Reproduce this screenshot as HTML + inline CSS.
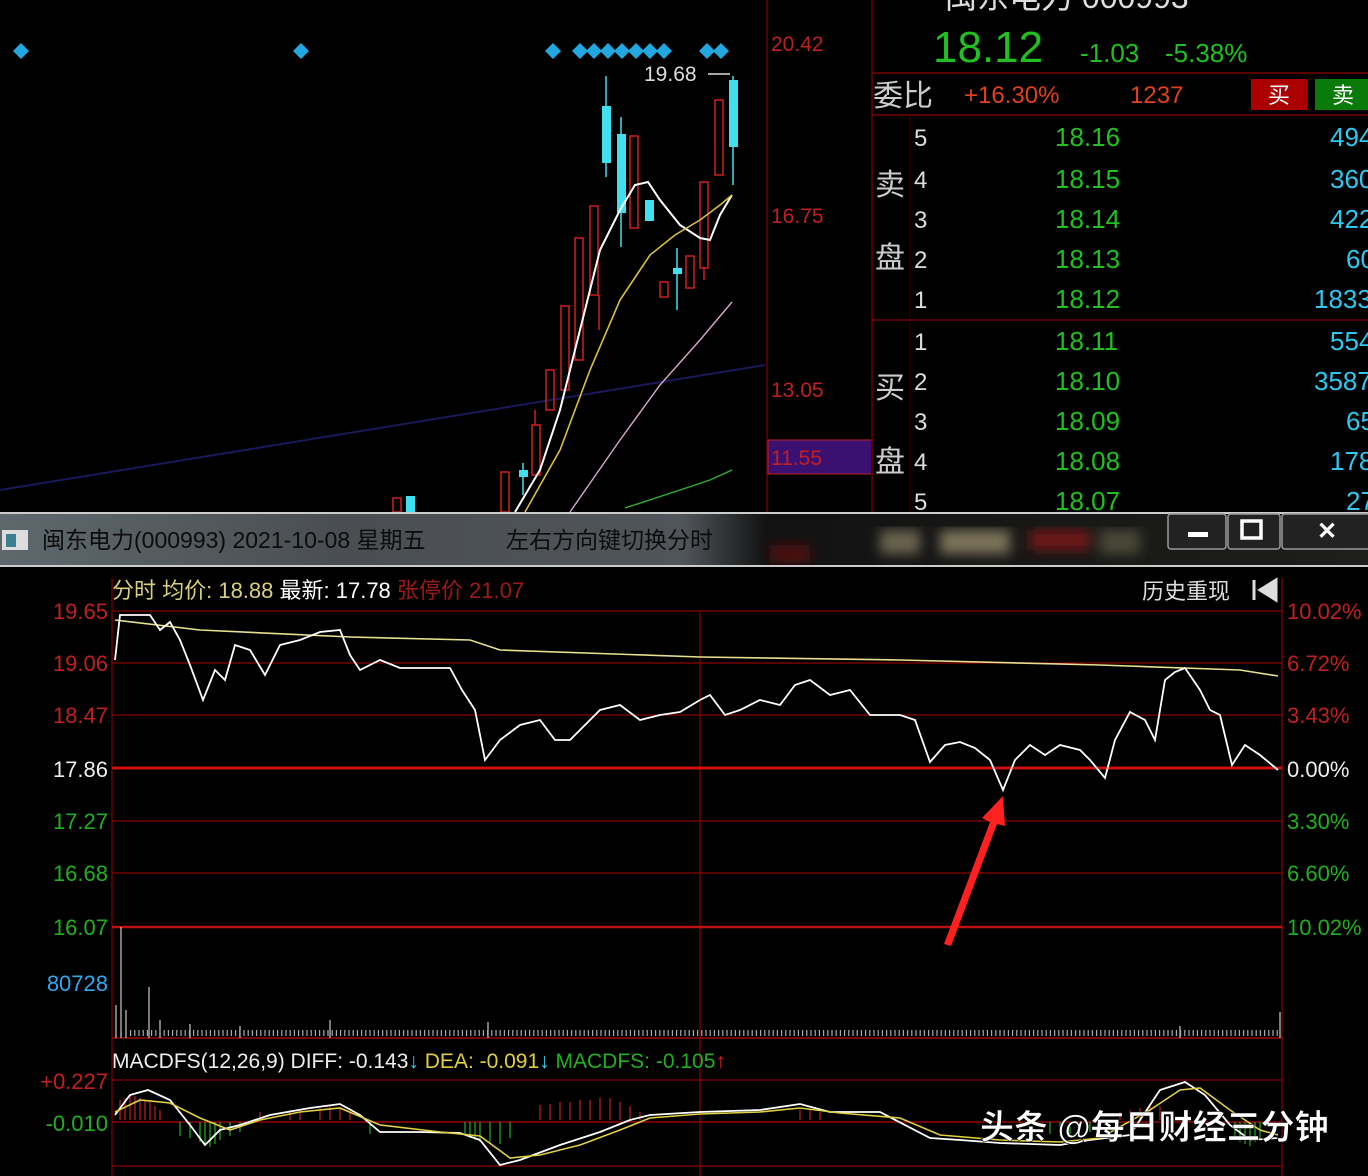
<!DOCTYPE html>
<html><head><meta charset="utf-8"><style>
html,body{margin:0;padding:0;background:#000;width:1368px;height:1176px;overflow:hidden}
svg{display:block}
text{font-family:"Liberation Sans","Noto Sans CJK SC",sans-serif}
</style></head><body>
<svg width="1368" height="1176" viewBox="0 0 1368 1176" xmlns="http://www.w3.org/2000/svg">
<defs>
<linearGradient id="tb" x1="0" y1="0" x2="1" y2="0"><stop offset="0" stop-color="#5e686c"/><stop offset="0.25" stop-color="#4a4e52"/><stop offset="0.5" stop-color="#50555a"/><stop offset="0.56" stop-color="#121212"/><stop offset="1" stop-color="#1e1e1c"/></linearGradient>
<filter id="bl"><feGaussianBlur stdDeviation="6"/></filter>
</defs>
<rect width="1368" height="1176" fill="#000"/>
<!-- top-left candle chart -->
<line x1="0" y1="490" x2="765" y2="365" stroke="#1a1a5a" stroke-width="2"/>
<g fill="#22a8e0">
<path d="M21 43l8 8-8 8-8-8z"/><path d="M301 43l8 8-8 8-8-8z"/><path d="M553 43l8 8-8 8-8-8z"/>
<path d="M580 43l8 8-8 8-8-8z"/><path d="M594 43l8 8-8 8-8-8z"/><path d="M608 43l8 8-8 8-8-8z"/><path d="M622 43l8 8-8 8-8-8z"/><path d="M636 43l8 8-8 8-8-8z"/><path d="M650 43l8 8-8 8-8-8z"/><path d="M664 43l8 8-8 8-8-8z"/>
<path d="M707 43l8 8-8 8-8-8z"/><path d="M721 43l8 8-8 8-8-8z"/>
</g>
<text x="644" y="81" fill="#ddd" font-size="21">19.68</text>
<line x1="708" y1="74" x2="730" y2="74" stroke="#ddd" stroke-width="1.5"/>
<g fill="none" stroke="#d02020" stroke-width="1.5">
<rect x="393" y="498" width="8" height="14"/><rect x="501" y="472" width="8" height="40"/><rect x="532" y="425" width="8" height="50"/>
<rect x="546" y="370" width="8" height="40"/><rect x="561" y="306" width="8" height="84"/><rect x="575" y="238" width="8" height="122"/>
<rect x="590" y="206" width="8" height="89"/><rect x="630" y="136" width="8" height="92"/><rect x="660" y="282" width="8" height="15"/>
<rect x="686" y="256" width="8" height="32"/><rect x="700" y="182" width="8" height="86"/><rect x="715" y="100" width="8" height="75"/>
<line x1="599" y1="295" x2="599" y2="330"/><line x1="535" y1="410" x2="535" y2="425"/><line x1="704" y1="268" x2="704" y2="280"/>
</g>
<g stroke="#40e0f0" stroke-width="1.5"><line x1="606" y1="76" x2="606" y2="177"/><line x1="621" y1="117" x2="621" y2="247"/><line x1="733" y1="76" x2="733" y2="185"/><line x1="677" y1="248" x2="677" y2="310"/><line x1="523" y1="463" x2="523" y2="495"/></g>
<g fill="#40e0f0">
<rect x="406" y="496" width="9" height="16"/><rect x="519" y="470" width="9" height="7"/><rect x="602" y="106" width="9" height="57"/>
<rect x="617" y="134" width="9" height="79"/><rect x="645" y="200" width="9" height="21"/><rect x="673" y="268" width="9" height="6"/><rect x="729" y="80" width="9" height="67"/>
</g>
<polyline fill="none" stroke="#fff" stroke-width="2" points="515,512 540,470 560,410 580,330 600,250 620,210 635,185 648,182 660,200 680,225 700,238 710,240 720,215 732,195"/>
<polyline fill="none" stroke="#d8c040" stroke-width="1.6" points="525,512 560,450 590,370 620,300 650,255 675,235 700,220 720,205 732,195"/>
<polyline fill="none" stroke="#d8a8c8" stroke-width="1.4" points="570,512 620,440 660,385 700,340 732,302"/>
<polyline fill="none" stroke="#30b030" stroke-width="1.4" points="625,508 680,490 710,480 732,470"/>
<!-- price axis -->
<line x1="767" y1="0" x2="767" y2="512" stroke="#500" stroke-width="2"/>
<text x="771" y="51" fill="#c02020" font-size="21">20.42</text>
<text x="771" y="223" fill="#c02020" font-size="21">16.75</text>
<text x="771" y="397" fill="#c02020" font-size="21">13.05</text>
<rect x="768" y="440" width="104" height="34" fill="#3a1070" stroke="#c02020"/>
<text x="771" y="465" fill="#c02020" font-size="21">11.55</text>
<!-- right panel -->
<line x1="872" y1="0" x2="872" y2="512" stroke="#500" stroke-width="2"/>
<text x="945" y="8" fill="#ddd" font-size="32">闽东电力 000993</text>
<text x="933" y="62" fill="#20c020" font-size="44" font-family="Liberation Mono,monospace">18.12</text>
<text x="1080" y="62" fill="#20c020" font-size="26" font-family="Liberation Mono,monospace">-1.03</text>
<text x="1165" y="62" fill="#20c020" font-size="26" font-family="Liberation Mono,monospace">-5.38%</text>
<line x1="872" y1="73" x2="1368" y2="73" stroke="#700" stroke-width="1.5"/>
<text x="873" y="106" fill="#ccc" font-size="30">委比</text>
<text x="964" y="103" fill="#e04020" font-size="24" font-family="Liberation Mono,monospace">+16.30%</text>
<text x="1130" y="103" fill="#e04020" font-size="24" font-family="Liberation Mono,monospace">1237</text>
<rect x="1251" y="79" width="56" height="31" fill="#a00"/><text x="1279" y="103" fill="#fff" font-size="22" text-anchor="middle">买</text>
<rect x="1315" y="79" width="53" height="31" fill="#0a7a0a"/><text x="1343" y="103" fill="#fff" font-size="22" text-anchor="middle">卖</text>
<line x1="872" y1="115" x2="1368" y2="115" stroke="#700" stroke-width="1.5"/>
<line x1="872" y1="320" x2="1368" y2="320" stroke="#700" stroke-width="1.5"/>
<line x1="910" y1="115" x2="910" y2="512" stroke="#400" stroke-width="1"/>
<g font-size="30" fill="#ccc"><text x="875" y="195">卖</text><text x="875" y="268">盘</text><text x="875" y="398">买</text><text x="875" y="472">盘</text></g>
<g font-size="24" fill="#ddd" font-family="Liberation Mono,monospace">
<text x="914" y="146">5</text><text x="914" y="188">4</text><text x="914" y="228">3</text><text x="914" y="268">2</text><text x="914" y="308">1</text>
<text x="914" y="350">1</text><text x="914" y="390">2</text><text x="914" y="430">3</text><text x="914" y="470">4</text><text x="914" y="510">5</text></g>
<g font-size="26" fill="#20c020" font-family="Liberation Mono,monospace">
<text x="1055" y="146">18.16</text><text x="1055" y="188">18.15</text><text x="1055" y="228">18.14</text><text x="1055" y="268">18.13</text><text x="1055" y="308">18.12</text>
<text x="1055" y="350">18.11</text><text x="1055" y="390">18.10</text><text x="1055" y="430">18.09</text><text x="1055" y="470">18.08</text><text x="1055" y="510">18.07</text></g>
<g font-size="26" fill="#30c8f0" font-family="Liberation Mono,monospace">
<text x="1330" y="146">494</text><text x="1330" y="188">360</text><text x="1330" y="228">422</text><text x="1346" y="268">60</text><text x="1314" y="308">1833</text>
<text x="1330" y="350">554</text><text x="1314" y="390">3587</text><text x="1346" y="430">65</text><text x="1330" y="470">178</text><text x="1346" y="510">27</text></g>
<!-- title bar -->
<rect x="0" y="513" width="1368" height="54" fill="url(#tb)"/>
<g filter="url(#bl)">
<rect x="880" y="530" width="40" height="24" fill="#6a6450"/><rect x="940" y="530" width="70" height="24" fill="#7a7258"/>
<rect x="1030" y="530" width="60" height="20" fill="#701818"/><rect x="770" y="545" width="40" height="18" fill="#501010"/>
<rect x="1100" y="530" width="40" height="24" fill="#4a4838"/>
</g>
<line x1="0" y1="513" x2="1368" y2="513" stroke="#ccc" stroke-width="2"/>
<line x1="0" y1="566" x2="1368" y2="566" stroke="#ccc" stroke-width="2"/>
<rect x="2" y="530" width="26" height="20" fill="#ddd"/><rect x="6" y="534" width="10" height="13" fill="#3a8090"/>
<text x="42" y="548" fill="#0c0c0c" font-size="23">闽东电力(000993) 2021-10-08 星期五</text>
<text x="506" y="548" fill="#0c0c0c" font-size="23">左右方向键切换分时</text>
<g fill="#222" stroke="#999" stroke-width="1.5">
<rect x="1168" y="514" width="58" height="35" rx="3"/><rect x="1228" y="514" width="52" height="35" rx="3"/><rect x="1282" y="514" width="90" height="35" rx="3"/>
</g>
<rect x="1188" y="532" width="20" height="5" fill="#fff"/>
<rect x="1242" y="521" width="19" height="17" fill="none" stroke="#fff" stroke-width="3.5"/>
<text x="1327" y="539" fill="#fff" font-size="24" text-anchor="middle" font-weight="bold">✕</text>
<!-- intraday grid -->
<g stroke="#8a0000" stroke-width="1.2">
<line x1="112" y1="611" x2="1282" y2="611"/><line x1="112" y1="663" x2="1282" y2="663"/><line x1="112" y1="715" x2="1282" y2="715"/>
<line x1="112" y1="821" x2="1282" y2="821"/><line x1="112" y1="873" x2="1282" y2="873"/>
<line x1="112" y1="1080" x2="1282" y2="1080"/><line x1="112" y1="1166" x2="1282" y2="1166"/>
<line x1="112" y1="578" x2="112" y2="1176"/><line x1="1282" y1="578" x2="1282" y2="1176"/><line x1="700" y1="611" x2="700" y2="1176"/>
</g>
<line x1="112" y1="768" x2="1282" y2="768" stroke="#d01010" stroke-width="3"/>
<line x1="112" y1="927" x2="1282" y2="927" stroke="#c01010" stroke-width="2.5"/>
<line x1="112" y1="1038" x2="1282" y2="1038" stroke="#900" stroke-width="1.5"/>
<line x1="112" y1="1122" x2="1282" y2="1122" stroke="#900" stroke-width="1.5"/>
<text x="112" y="598" fill="#d8d080" font-size="22">分时 均价: 18.88 <tspan fill="#fff">最新: 17.78</tspan> <tspan fill="#a01818">张停价 21.07</tspan></text>
<text x="1142" y="599" fill="#ddd" font-size="22">历史重现</text>
<path d="M1254 580v20M1276 580l-16 10 16 10z" stroke="#ddd" stroke-width="3" fill="#ddd"/>
<g font-size="22">
<text x="108" y="619" fill="#c02020" text-anchor="end">19.65</text><text x="108" y="671" fill="#c02020" text-anchor="end">19.06</text>
<text x="108" y="723" fill="#c02020" text-anchor="end">18.47</text><text x="108" y="777" fill="#eee" text-anchor="end">17.86</text>
<text x="108" y="829" fill="#20b020" text-anchor="end">17.27</text><text x="108" y="881" fill="#20b020" text-anchor="end">16.68</text>
<text x="108" y="935" fill="#20b020" text-anchor="end">16.07</text><text x="108" y="991" fill="#30a8f0" text-anchor="end">80728</text>
<text x="1287" y="619" fill="#c02020">10.02%</text><text x="1287" y="671" fill="#c02020">6.72%</text>
<text x="1287" y="723" fill="#c02020">3.43%</text><text x="1287" y="777" fill="#eee">0.00%</text>
<text x="1287" y="829" fill="#20b020">3.30%</text><text x="1287" y="881" fill="#20b020">6.60%</text><text x="1287" y="935" fill="#20b020">10.02%</text>
<text x="108" y="1089" fill="#c02020" text-anchor="end">+0.227</text><text x="108" y="1131" fill="#20b020" text-anchor="end">-0.010</text>
</g>
<polyline fill="none" stroke="#e8e090" stroke-width="1.6" points="115,620 200,630 350,637 470,640 500,650 700,657 900,660 1100,665 1240,670 1278,676"/>
<polyline fill="none" stroke="#fff" stroke-width="1.8" points="115,660 120,615 150,615 160,630 170,622 180,640 190,665 203,700 215,670 225,680 235,645 250,650 265,675 280,645 300,640 320,632 340,630 350,655 360,670 380,660 400,668 450,668 462,690 475,710 485,760 500,740 520,725 540,720 555,740 570,740 600,710 620,705 640,720 660,715 680,712 700,700 710,695 725,715 740,710 760,700 780,705 795,685 810,680 830,695 850,690 870,715 900,715 915,720 930,762 945,745 960,742 975,748 990,760 1003,790 1015,760 1030,745 1045,755 1060,745 1080,750 1090,760 1105,778 1115,740 1130,712 1145,720 1155,740 1165,680 1175,672 1185,668 1200,690 1210,710 1220,715 1232,765 1245,745 1260,755 1278,770"/>
<!-- volume -->
<g stroke="#ccc" stroke-width="1.2">
<line x1="121" y1="927" x2="121" y2="1038"/><line x1="149" y1="987" x2="149" y2="1038"/><line x1="116" y1="1005" x2="116" y2="1038"/><line x1="126" y1="1010" x2="126" y2="1038"/>
<line x1="160" y1="1020" x2="160" y2="1038"/><line x1="190" y1="1024" x2="190" y2="1038"/><line x1="240" y1="1026" x2="240" y2="1038"/><line x1="330" y1="1020" x2="330" y2="1038"/>
<line x1="488" y1="1022" x2="488" y2="1038"/><line x1="1180" y1="1026" x2="1180" y2="1038"/><line x1="1280" y1="1012" x2="1280" y2="1038"/>
</g>
<line x1="130" y1="1033" x2="1278" y2="1033" stroke="#aaa" stroke-width="6" stroke-dasharray="1.2 3"/>
<!-- macd -->
<text x="112" y="1068" fill="#eee" font-size="21">MACDFS(12,26,9) DIFF: -0.143<tspan fill="#40d0f0">↓</tspan> <tspan fill="#e0d040">DEA: -0.091</tspan><tspan fill="#40d0f0">↓</tspan> <tspan fill="#20b020">MACDFS: -0.105</tspan><tspan fill="#e02020">↑</tspan></text>
<g stroke="#c02020" stroke-width="1.2"><path d="M120 1120v-20M125 1120v-22M130 1120v-25M135 1120v-24M140 1120v-22M145 1120v-20M150 1120v-18M155 1120v-14M160 1120v-10M260 1120v-8M290 1120v-10M300 1120v-10M320 1120v-12M330 1120v-14M340 1120v-12M350 1120v-8M540 1120v-15M550 1120v-16M560 1120v-18M570 1120v-18M580 1120v-20M590 1120v-20M600 1120v-22M610 1120v-22M620 1120v-18M630 1120v-14M640 1120v-8M800 1120v-10M810 1120v-10M820 1120v-8M1120 1120v-8M1130 1120v-10M1140 1120v-12M1150 1120v-14M1160 1120v-14"/></g>
<g stroke="#20b020" stroke-width="1.2"><path d="M180 1122v14M190 1122v16M200 1122v20M205 1122v22M210 1122v25M215 1122v22M220 1122v18M230 1122v14M240 1122v10M370 1122v12M465 1122v12M470 1122v16M475 1122v18M480 1122v20M490 1122v22M500 1122v22M510 1122v16M1020 1122v10M1050 1122v12M1060 1122v14M1070 1122v12M1090 1122v10M1235 1122v16M1240 1122v20M1245 1122v22M1250 1122v24M1255 1122v20M1260 1122v16"/></g>
<polyline fill="none" stroke="#fff" stroke-width="1.8" points="115,1115 130,1095 148,1090 170,1100 190,1125 205,1145 220,1130 240,1125 270,1115 310,1108 340,1104 360,1115 380,1132 420,1132 460,1133 480,1140 500,1165 520,1160 560,1145 600,1132 630,1120 650,1115 700,1112 760,1110 800,1104 830,1112 880,1112 930,1138 960,1140 1000,1143 1060,1145 1090,1140 1130,1135 1160,1090 1185,1082 1205,1095 1230,1125 1250,1140 1278,1138"/>
<polyline fill="none" stroke="#e0d040" stroke-width="1.6" points="115,1112 140,1100 170,1103 200,1118 230,1130 260,1120 300,1112 340,1108 380,1125 440,1132 480,1136 510,1158 540,1155 580,1145 620,1130 650,1118 700,1114 760,1112 800,1108 840,1113 900,1118 940,1135 1000,1140 1060,1142 1100,1138 1150,1110 1180,1090 1200,1088 1230,1110 1260,1130 1278,1135"/>
<!-- arrow -->
<path d="M944 944L990 822L982 818L1003 796L1005 826L997 824L951 946Z" fill="#ff2020"/>
<!-- watermark -->
<text x="980" y="1139" fill="#fff" font-size="34" font-weight="bold" stroke="#000" stroke-width="0.6">头条 @每日财经三分钟</text>
</svg>
</body></html>
